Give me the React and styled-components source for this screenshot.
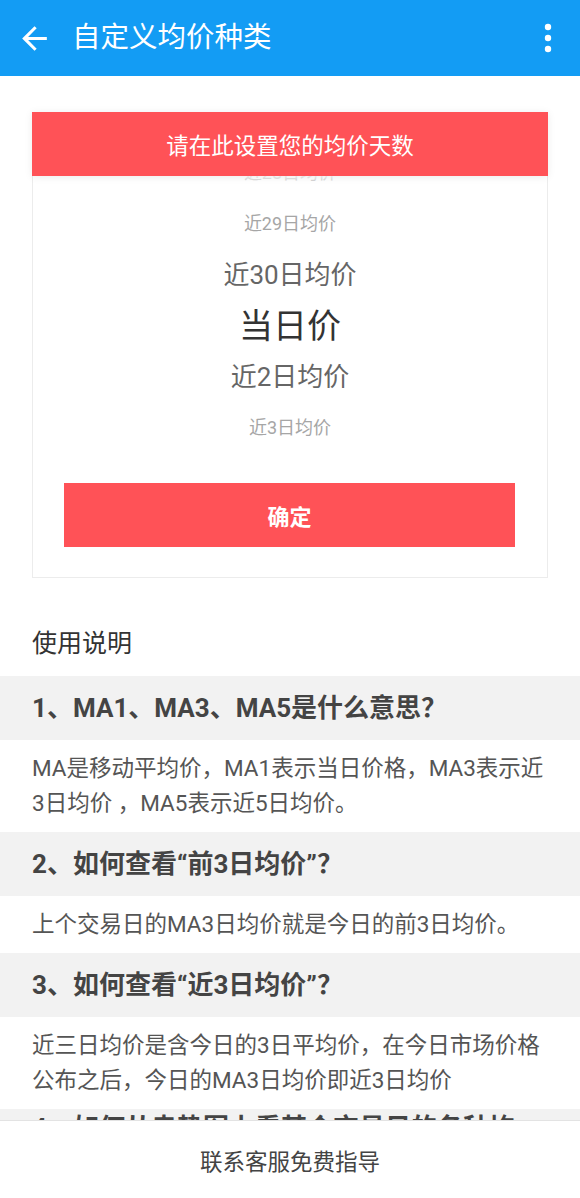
import React from "react";
import styled, { createGlobalStyle } from "styled-components";
import { MdArrowBack } from "react-icons/md";

const GlobalStyle = createGlobalStyle`
  html, body {
    margin: 0;
    padding: 0;
    height: 100%;
  }
  body {
    font-family: Roboto, "Noto Sans CJK SC", sans-serif;
    background: #fff;
  }
  #root {
    height: 100%;
  }
  * {
    box-sizing: border-box;
  }
`;

const Screen = styled.div`
  display: flex;
  flex-direction: column;
  height: 100vh;
  overflow: hidden;
  background: #fff;
`;

const AppBar = styled.header`
  flex: none;
  height: 76px;
  display: flex;
  align-items: center;
  padding: 0 28px 0 16px;
  background: #139cf4;
  color: #fff;
`;

const BackButton = styled.button`
  display: flex;
  padding: 0;
  margin-right: 19px;
  border: 0;
  background: none;
  color: #fff;
`;

const Title = styled.h1`
  margin: 0;
  font-size: 28.5px;
  font-weight: 400;
  line-height: 1;
`;

const MoreButton = styled.button`
  display: flex;
  margin-left: auto;
  padding: 0;
  border: 0;
  background: none;
`;

const Body = styled.main`
  flex: 1;
  overflow: hidden;
`;

// picker card
const PickerCard = styled.section`
  margin: 36px 32px 0;
  padding-bottom: 30px;
  border: 1px solid #ececec;
  background: #fff;
`;

const Banner = styled.div`
  position: relative;
  z-index: 2;
  height: 64px;
  margin: -1px -1px 0;
  display: flex;
  align-items: center;
  justify-content: center;
  background: #ff5257;
  color: #fff;
  font-size: 22.5px;
  box-shadow: 0 1px 8px rgba(0, 0, 0, 0.08);
`;

const Wheel = styled.div`
  position: relative;
  height: 275px;
  overflow: hidden;
`;

const WheelFade = styled.div`
  position: absolute;
  top: 0;
  left: 0;
  right: 0;
  height: 12px;
  background: linear-gradient(rgba(255, 255, 255, 0.85), rgba(255, 255, 255, 0));
  z-index: 1;
`;

const WheelList = styled.div`
  display: flex;
  flex-direction: column;
`;

const sizes = ["34px", "26px", "18px"];
const colors = ["#333", "#666", "#a6a6a6"];

const WheelItem = styled.div`
  height: 51px;
  display: flex;
  align-items: center;
  justify-content: center;
  font-size: ${(p) => sizes[Math.min(p.$dist, 2)]};
  color: ${(p) => colors[Math.min(p.$dist, 2)]};
`;

const ConfirmButton = styled.button`
  display: block;
  width: calc(100% - 63px);
  height: 64px;
  margin: 32px 32px 0 31px;
  border: 0;
  background: #ff5257;
  color: #fff;
  font-family: inherit;
  font-size: 22px;
  font-weight: 700;
`;

// guide
const GuideTitle = styled.h2`
  margin: 0;
  padding: 49px 32px 15px;
  font-size: 25px;
  font-weight: 400;
  line-height: 34px;
  color: #333;
`;

const Question = styled.h3`
  margin: 0;
  min-height: 64px;
  display: flex;
  align-items: center;
  padding: 4px 32px;
  background: #f2f2f2;
  font-size: 26px;
  font-weight: 700;
  line-height: 31px;
  color: #444;
`;

const Answer = styled.p`
  margin: 0;
  padding: 11px 32px;
  font-size: 22.5px;
  line-height: 35px;
  color: #555;
`;

const ContactBar = styled.footer`
  flex: none;
  height: 78px;
  display: flex;
  align-items: center;
  justify-content: center;
  border-top: 1px solid #e3e3e3;
  background: #fff;
  font-size: 22.5px;
  color: #444;
`;

const options = ["近28日均价", "近29日均价", "近30日均价", "当日价", "近2日均价", "近3日均价", "近4日均价"];
const selected = 3;

const faq = [
  {
    q: "1、MA1、MA3、MA5是什么意思？",
    a: "MA是移动平均价，MA1表示当日价格，MA3表示近3日均价 ，MA5表示近5日均价。",
  },
  {
    q: "2、如何查看“前3日均价”？",
    a: "上个交易日的MA3日均价就是今日的前3日均价。",
  },
  {
    q: "3、如何查看“近3日均价”？",
    a: "近三日均价是含今日的3日平均价，在今日市场价格公布之后，今日的MA3日均价即近3日均价",
  },
  {
    q: "4、如何从走势图上看某个交易日的各种均价？",
    a: "在走势图上长按某个交易日，即可查看该交易日的各种均价。",
  },
];

function MoreIcon() {
  return (
    <svg width="8" height="30" viewBox="0 0 8 30">
      <circle cx="4" cy="4" r="3.2" fill="#fff" />
      <circle cx="4" cy="15" r="3.2" fill="#fff" />
      <circle cx="4" cy="26" r="3.2" fill="#fff" />
    </svg>
  );
}

export default function App() {
  return (
    <Screen>
      <GlobalStyle />
      <AppBar>
        <BackButton aria-label="返回">
          <MdArrowBack size={37} />
        </BackButton>
        <Title>自定义均价种类</Title>
        <MoreButton aria-label="更多">
          <MoreIcon />
        </MoreButton>
      </AppBar>

      <Body>
        <PickerCard>
          <Banner>请在此设置您的均价天数</Banner>
          <Wheel>
            <WheelFade />
            <WheelList style={{ transform: "translateY(-31px)" }}>
              {options.map((o, i) => (
                <WheelItem key={o} $dist={Math.abs(i - selected)}>
                  {o}
                </WheelItem>
              ))}
            </WheelList>
          </Wheel>
          <ConfirmButton>确定</ConfirmButton>
        </PickerCard>

        <GuideTitle>使用说明</GuideTitle>
        {faq.map((item) => (
          <React.Fragment key={item.q}>
            <Question>{item.q}</Question>
            <Answer>{item.a}</Answer>
          </React.Fragment>
        ))}
      </Body>

      <ContactBar>联系客服免费指导</ContactBar>
    </Screen>
  );
}
